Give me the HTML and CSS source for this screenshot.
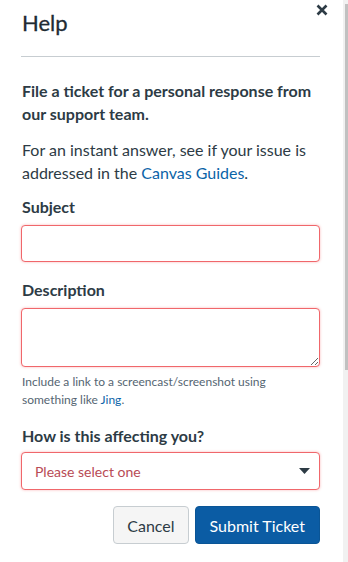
FILE: index.html
```html
<!DOCTYPE html>
<html lang="en">
<head>
    <meta charset="UTF-8">
    <meta name="viewport" content="width=device-width, initial-scale=1.0">
    <title>Help</title>
    <link rel="stylesheet" href="styles.css">
</head>
<body>
    <div class="tray">
        <!-- Header -->
        <div class="tray-header">
            <h1>Help</h1>
            <button class="close-btn" aria-label="Close">
                <svg width="12" height="12" viewBox="0 0 12 12">
                    <path d="M1.5 1.5 L10.5 10.5 M10.5 1.5 L1.5 10.5" stroke="#2d3b45" stroke-width="2.6" stroke-linecap="butt"/>
                </svg>
            </button>
        </div>

        <p class="intro">File a ticket for a personal response from our support team.</p>
        <p class="guides">For an instant answer, see if your issue is addressed in the <a href="#">Canvas Guides</a>.</p>

        <form class="ticket-form">
            <label class="field-label" for="subject">Subject</label>
            <input class="field error" id="subject" type="text">

            <label class="field-label label-desc" for="description">Description</label>
            <textarea class="field field-area error" id="description"></textarea>
            <p class="hint">Include a link to a screencast/screenshot using something like <a href="#">Jing</a>.</p>

            <label class="field-label label-severity" for="severity">How is this affecting you?</label>
            <div class="select-wrap">
                <select class="field field-select error" id="severity">
                    <option>Please select one</option>
                </select>
                <svg class="select-arrow" width="11" height="6" viewBox="0 0 11 6">
                    <path d="M0 0 H11 L5.5 6 Z" fill="#2d3b45"/>
                </svg>
            </div>

            <div class="actions">
                <button type="button" class="btn btn-cancel">Cancel</button>
                <button type="button" class="btn btn-primary">Submit Ticket</button>
            </div>
        </form>
    </div>

    <!-- fake scrollbar -->
    <div class="scrollbar">
        <div class="scroll-thumb"></div>
    </div>
</body>
</html>
```

FILE: styles.css
```css
/* General Reset */
body {
    margin: 0;
    padding: 0;
    font-family: 'Lato', 'Liberation Sans', sans-serif;
    background: #ffffff;
    color: #2d3b45;
    display: flex;
    height: 562px;
    overflow: hidden;
}

/* Tray */
.tray {
    flex: 1;
    padding: 0 23px 0 21px;
    position: relative;
}

.tray-header {
    padding: 8px 0 18px;
    border-bottom: 1px solid #c7cdd1;
}

.tray-header h1 {
    margin: 0 0 0 1px;
    font-size: 22px;
    line-height: 30px;
    font-weight: 400;
    color: #1f2b33;
    -webkit-text-stroke: 0.3px #1f2b33;
}

.close-btn {
    position: absolute;
    top: 4px;
    right: 15px;
    background: none;
    border: none;
    padding: 0;
    width: 12px;
    height: 12px;
    cursor: pointer;
}

.close-btn svg {
    display: block;
}

/* Intro text */
.intro {
    margin: 22px 0 0 1px;
    font-size: 16px;
    line-height: 23px;
    font-weight: 700;
}

.guides {
    margin: 13px 0 0 1px;
    font-size: 16px;
    line-height: 23px;
}

a {
    color: #0b64a8;
    text-decoration: none;
}

/* Form */
.ticket-form {
    display: flex;
    flex-direction: column;
}

.field-label {
    margin: 11px 0 0 1px;
    font-size: 16px;
    line-height: 24px;
    font-weight: 700;
}

.label-desc {
    margin-top: 16px;
}

.label-severity {
    margin-top: 15px;
}

.field {
    box-sizing: border-box;
    width: 100%;
    margin: 6px 0 0;
    height: 37px;
    font-family: inherit;
    font-size: 14px;
    border-radius: 4px;
    background: #fff;
    outline: none;
}

.error {
    border: 1px solid #f0676b;
    box-shadow: 0 0 3px rgba(238, 6, 18, 0.28);
}

.field-area {
    height: 59px;
    margin-top: 6px;
    resize: vertical;
    display: block;
}

.hint {
    margin: 6px 0 0 1px;
    font-size: 12px;
    line-height: 18px;
    color: #556572;
}

.select-wrap {
    position: relative;
    margin-top: 4px;
}

.field-select {
    margin: 0;
    height: 38px;
    padding: 0 13px;
    color: #b84b55;
    -webkit-appearance: none;
    appearance: none;
    display: block;
}

.select-arrow {
    position: absolute;
    right: 10px;
    top: 16px;
}

/* Buttons */
.actions {
    display: flex;
    justify-content: flex-end;
    gap: 6px;
    margin-top: 16px;
}

.btn {
    height: 38px;
    font-family: inherit;
    font-size: 16px;
    border-radius: 4px;
    padding: 0 14px;
    cursor: pointer;
}

.btn-cancel {
    padding: 0 13px;
    background: #f5f5f5;
    border: 1px solid #c7cdd1;
    color: #2d3b45;
}

.btn-primary {
    background: #0b5ca4;
    border: 1px solid #0a5596;
    color: #ffffff;
}

/* Scrollbar */
.scrollbar {
    width: 5px;
    flex-shrink: 0;
    background: #f1f1f1;
    padding-top: 4px;
}

.scroll-thumb {
    margin-left: 2px;
    width: 3px;
    height: 366px;
    background: #c1c1c1;
}
```
